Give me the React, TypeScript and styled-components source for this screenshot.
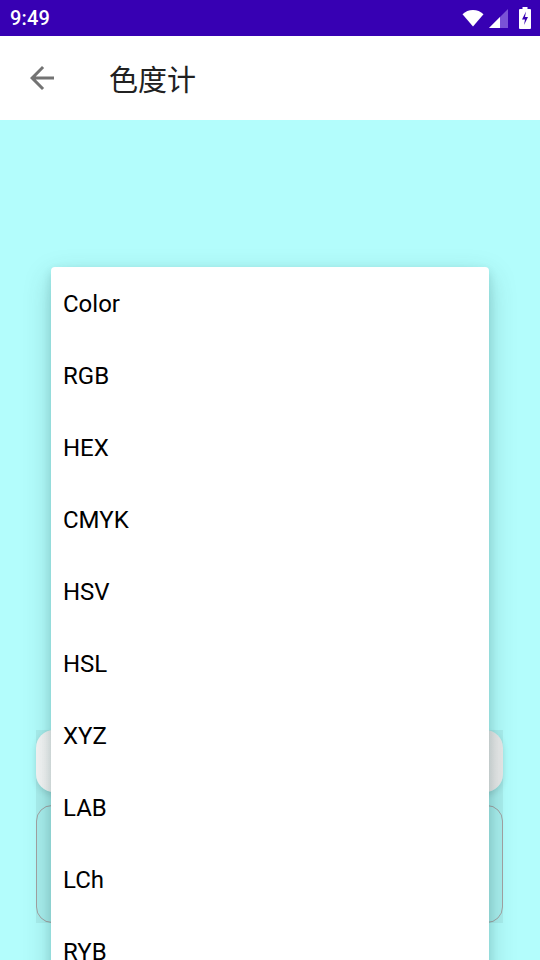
import React from "react";
import styled, { createGlobalStyle } from "styled-components";

const GlobalStyle = createGlobalStyle`
  html, body {
    margin: 0;
    padding: 0;
    background: #b3fdfc;
  }
  * {
    box-sizing: border-box;
  }
`;

const formats = ["Color", "RGB", "HEX", "CMYK", "HSV", "HSL", "XYZ", "LAB", "LCh", "RYB"];

const Screen = styled.div`
  position: relative;
  width: 540px;
  height: 960px;
  overflow: hidden;
  display: flex;
  flex-direction: column;
  font-family: Roboto, "Noto Sans", sans-serif;
`;

const StatusBar = styled.div`
  height: 36px;
  background: #3700b3;
  display: flex;
  align-items: center;
  justify-content: space-between;
  padding: 0 9px 0 10px;
  color: #fff;
`;

const Clock = styled.span`
  font-size: 20px;
  font-weight: 500;
  letter-spacing: 0.2px;
`;

const StatusIcons = styled.div`
  display: flex;
  align-items: center;
  gap: 5px;
`;

const AppBar = styled.header`
  height: 84px;
  background: #fff;
  display: flex;
  align-items: center;
  padding-left: 24px;
`;

const BackButton = styled.div`
  width: 36px;
  height: 36px;
  display: flex;
  align-items: center;
  justify-content: center;
`;

const Title = styled.h1`
  margin: 0 0 0 49px;
  font-family: "Noto Sans CJK SC", "Noto Sans", sans-serif;
  font-size: 29px;
  font-weight: 400;
  color: #212121;
`;

const Content = styled.main`
  flex: 1;
  background: #b3fdfc;
  display: flex;
  flex-direction: column;
  justify-content: flex-end;
  padding: 0 37px 37px 36px;
`;

const Panel = styled.section`
  display: flex;
  flex-direction: column;
  gap: 13px;
  background: #a9efee;
`;

const SliderCard = styled.div`
  height: 62px;
  border-radius: 18px;
  background: linear-gradient(90deg, #f6f6f6, #e9e9e9);
  box-shadow: 0 3px 6px rgba(0, 0, 0, 0.12);
`;

const OutlinedBox = styled.div`
  height: 118px;
  border: 1.5px solid #a3a3a3;
  border-radius: 16px;
`;

const Menu = styled.ul`
  position: absolute;
  left: 51px;
  top: 267px;
  width: 438px;
  margin: 0;
  padding: 0;
  list-style: none;
  background: #fff;
  border-radius: 4px;
  box-shadow: 0 10px 28px rgba(0, 60, 60, 0.22), 0 4px 10px rgba(0, 60, 60, 0.14);
`;

const MenuItem = styled.li`
  height: 72px;
  display: flex;
  align-items: center;
  padding: 2px 0 0 12px;
  font-size: 24px;
  color: #000;
`;

const WifiIcon = () => (
  <svg width="22" height="18" viewBox="0 0 22 18">
    <path d="M11 17.5 0.5 5.2C3.4 2.6 7 1 11 1s7.6 1.6 10.5 4.2z" fill="#fff" />
  </svg>
);

const SignalIcon = () => (
  <svg width="19" height="19" viewBox="0 0 19 19">
    <path d="M19 0v19H0z" fill="#7a52d6" />
    <path d="M11 8v11H0z" fill="#fff" />
  </svg>
);

const BatteryIcon = () => (
  <svg width="12" height="22" viewBox="0 0 12 22" style={{ marginLeft: 6 }}>
    <rect x="3.5" y="0" width="5" height="2.5" fill="#fff" />
    <rect x="0" y="2" width="12" height="20" rx="1" fill="#fff" />
    <path d="M7 4.5 3 12.5h3l-1 5.5 4-8H6z" fill="#3700b3" />
  </svg>
);

const ArrowBack = () => (
  <svg width="36" height="36" viewBox="0 0 24 24">
    <path
      d="M20 11H7.83l5.59-5.59L12 4l-8 8 8 8 1.41-1.41L7.83 13H20v-2z"
      fill="#737373"
    />
  </svg>
);

export default function App() {
  return (
    <Screen>
      <GlobalStyle />
      <StatusBar>
        <Clock>9:49</Clock>
        <StatusIcons>
          <WifiIcon />
          <SignalIcon />
          <BatteryIcon />
        </StatusIcons>
      </StatusBar>
      <AppBar>
        <BackButton>
          <ArrowBack />
        </BackButton>
        <Title>色度计</Title>
      </AppBar>
      <Content>
        <Panel>
          <SliderCard />
          <OutlinedBox />
        </Panel>
      </Content>
      <Menu>
        {formats.map((f) => (
          <MenuItem key={f}>{f}</MenuItem>
        ))}
      </Menu>
    </Screen>
  );
}
